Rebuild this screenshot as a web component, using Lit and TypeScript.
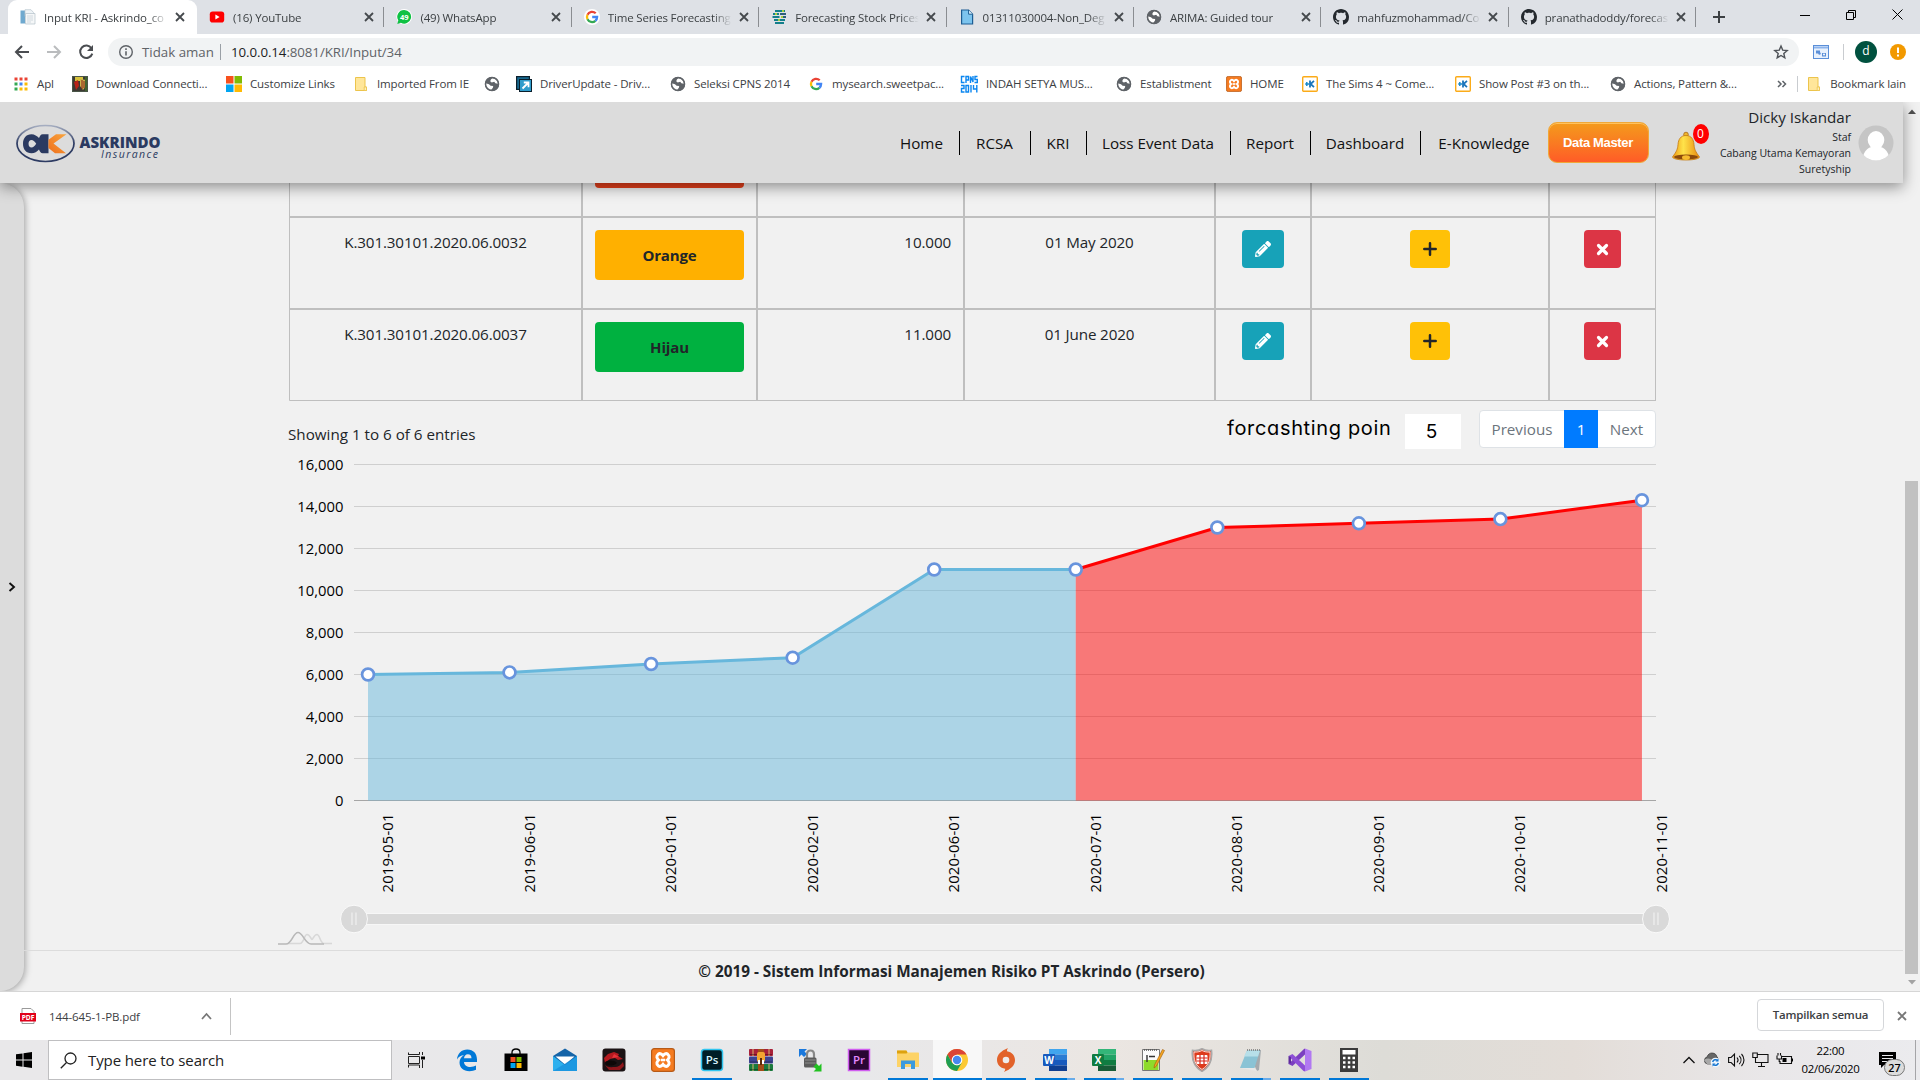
import { LitElement, html, svg, css, nothing } from "lit";
import { customElement } from "lit/decorators.js";
import { classMap } from "lit/directives/class-map.js";

const icon = (size: number, box: number, body: unknown) =>
  html`<svg class="ico" width=${size} height=${size} viewBox="0 0 ${box} ${box}">${body}</svg>`;

const globe = () => icon(16, 16, svg`
  <circle cx="8" cy="8" r="7.1" fill="#5f6368"/>
  <path d="M1.6 7.2 5 8.3l1.6 1.4 2.6.2-.3 1.8-2 2.6C3.500 13.500 1.500 11 1.600 7.200z" fill="#fff"/>
  <path d="M8.300 2.200 6.900 3.600 6.200 5.300l1.500 1.100 2.500-.6 1.200 1.400 2.500.5c0-2.600-1.600-5.200-5.600-5.500z" fill="#fff"/>
  <circle cx="8" cy="8" r="6.500" fill="none" stroke="#5f6368" stroke-width="1.500"/>`);
const google = () => icon(16, 16, svg`
  <circle cx="8" cy="8" r="8" fill="#fff"/>
  <g fill="none" stroke-width="2.300">
    <path d="M11.700 4.300A5.100 5.100 0 0 0 3.500 5.700" stroke="#ea4335"/>
    <path d="M3.500 5.700a5.100 5.100 0 0 0 0 4.600" stroke="#fbbc05"/>
    <path d="M3.500 10.300a5.100 5.100 0 0 0 7.900 1.500" stroke="#34a853"/>
    <path d="M8.200 8h4.900a5.100 5.100 0 0 1-1.700 3.800" stroke="#4285f4"/>
  </g>`);
const github = () => icon(16, 16, svg`
  <path fill="#24292e" d="M8 0C3.580 0 0 3.580 0 8c0 3.540 2.290 6.530 5.470 7.590.4.070.55-.17.55-.38 0-.19-.01-.82-.01-1.490-2.010.37-2.530-.49-2.690-.94-.09-.23-.48-.94-.82-1.130-.28-.15-.68-.52-.01-.53.63-.01 1.080.58 1.230.82.72 1.210 1.870.87 2.330.66.07-.52.28-.87.51-1.070-1.780-.2-3.640-.89-3.640-3.950 0-.87.31-1.590.82-2.150-.08-.2-.36-1.020.08-2.120 0 0 .67-.21 2.200.82.64-.18 1.320-.27 2-.27s1.360.09 2 .27c1.530-1.040 2.200-.82 2.200-.82.44 1.100.16 1.920.08 2.120.51.56.82 1.270.82 2.150 0 3.070-1.870 3.750-3.650 3.950.29.25.54.73.54 1.480 0 1.070-.01 1.930-.01 2.200 0 .21.15.46.55.38A8.010 8.010 0 0 0 16 8c0-4.420-3.580-8-8-8z"/>`);
const folder = () => icon(16, 16, svg`
  <path d="M2.500 1.500h9.500v9.500h1.500v3.500h-11z" fill="#ffe69a" stroke="#ecc44c"/>
  <path d="M11.200 14.500v-3.500h2.300v3.500z" fill="#ffefb8" stroke="#ecc44c" stroke-width=".8"/>`);
const xampp = (s: number) => icon(s, 16, svg`
  <rect x=".4" y=".4" width="15.200" height="15.200" rx="1.800" fill="#f57b20" stroke="#b75a17" stroke-width=".8"/>
  <path d="M4.800 4.200c1.200-.9 2.300-.2 3.200.9.900-1.100 2-1.800 3.200-.9 1.500 1.200.9 2.700-.3 3.800 1.200 1.100 1.800 2.600.3 3.800-1.200.9-2.300.2-3.200-.9-.9 1.100-2 1.800-3.200.9-1.500-1.200-.9-2.700.3-3.800-1.200-1.100-1.800-2.600-.3-3.800z" fill="none" stroke="#fff" stroke-width="2"/>
  <path d="M6.600 8h2.800" stroke="#fff" stroke-width="1.700"/>`);
const kaskus = () => icon(16, 16, svg`
  <rect x=".7" y=".7" width="14.600" height="14.600" rx="1" fill="#fff" stroke="#fbab19" stroke-width="1.400"/>
  <path d="M3.200 8h4M4.800 6v4" stroke="#1b8ac9" stroke-width="1.500"/><path d="M12 4.900 8.600 8l3.400 3.100M8 4.500v7" fill="none" stroke="#1b75bb" stroke-width="1.800"/>`);
const msft = () => icon(16, 16, svg`
  <path d="M0 0h7.500v7.500H0z" fill="#f8511d"/><path d="M8.500 0H16v7.500H8.500z" fill="#80bb03"/>
  <path d="M0 8.500h7.500V16H0z" fill="#02a5f1"/><path d="M8.500 8.500H16V16H8.500z" fill="#ffba03"/>`);

interface Tab { title: string; icon: unknown; active?: boolean }
const TABS: Tab[] = [
  { title: "Input KRI - Askrindo_co", active: true, icon: icon(16, 16, svg`
    <path d="M.5 1.500h4.500v13H.5z" fill="#6fa9cf"/><path d="M5 .7h6l2.500 2.800v4H5z" fill="#eef3f6" stroke="#b9c6ce" stroke-width=".7"/>
    <path d="M5.500 4.500h9.500v10.500H5.500z" fill="#f5f7f8" stroke="#b5c2ca" stroke-width=".7"/><path d="M7 7h6M7 9h6M7 11h6M7 13h4" stroke="#c8d2d8" stroke-width=".8"/>`) },
  { title: "(16) YouTube", icon: icon(16, 16, svg`
    <rect x=".8" y="2.500" width="14.400" height="11" rx="2.800" fill="#f00"/><path d="M6.400 5.500v5l4.200-2.500z" fill="#fff"/>`) },
  { title: "(49) WhatsApp", icon: icon(16, 16, svg`
    <circle cx="8.200" cy="7.800" r="7.800" fill="#fff"/><path d="M8.200 1a6.800 6.800 0 1 1-3.300 12.700L1.300 15l1-3.600A6.800 6.800 0 0 1 8.200 1z" fill="#0fc143"/>
    <text x="8.200" y="10.600" font-size="7.500" font-weight="700" fill="#fff" text-anchor="middle">49</text>`) },
  { title: "Time Series Forecasting", icon: google() },
  { title: "Forecasting Stock Prices", icon: icon(16, 16, svg`
    <path d="M4 2h10M2 5h6M1.500 8h7M3 11h11M4 14h9" stroke="#147f8b" stroke-width="2"/><path d="M9 5h6M10 8h5" stroke="#2c5f7c" stroke-width="2"/>
    <path d="M4 5h2M10 8h2M7 11h2M11 2h2" stroke="#a3cf3c" stroke-width="2"/>`) },
  { title: "01311030004-Non_Deg", icon: icon(16, 16, svg`
    <path d="M2.600 1h7l4 4.200V15h-11z" fill="#7cc4ee" stroke="#1d5d93" stroke-width="1.200"/><path d="M9.600 1v4.200h4" fill="#e1f3fd" stroke="#1d5d93"/>`) },
  { title: "ARIMA: Guided tour", icon: globe() },
  { title: "mahfuzmohammad/Co", icon: github() },
  { title: "pranathadoddy/forecas", icon: github() },
];

const BOOKMARKS: { label: string; icon: unknown }[] = [
  { label: "Apl", icon: icon(16, 16, svg`${[0, 1, 2].map(r => [0, 1, 2].map(c => svg`
    <rect x=${1.500 + c * 5} y=${1.500 + r * 5} width="3" height="3" fill=${["#ea4335", "#ea4335", "#ea4335", "#34a853", "#4285f4", "#fbbc05", "#34a853", "#fbbc05", "#fbbc05"][r * 3 + c]}/>`))}`) },
  { label: "Download Connecti...", icon: icon(16, 16, svg`
    <rect width="16" height="16" fill="#3c3a33"/><path d="M3 1h8v4H3z" fill="#d8c23c"/><path d="M2 6l4-2 1 6-3 4z" fill="#b92318"/><path d="M8 3l6 1v6l-3 4-3-4z" fill="#c9b24a"/><path d="M10 4v9M12 5v7" stroke="#8b1c14"/><path d="M13 1h2v14h-2z" fill="#42632d"/>
    <rect x=".5" y=".5" width="15" height="15" fill="none" stroke="#4a5548"/>`) },
  { label: "Customize Links", icon: msft() },
  { label: "Imported From IE", icon: folder() },
  { label: "", icon: globe() },
  { label: "DriverUpdate - Driv...", icon: icon(16, 16, svg`
    <rect x=".6" y=".6" width="12.800" height="12.800" fill="#17688f" stroke="#0b1f2c" stroke-width="1.200"/><rect x="3.500" y="3.500" width="12" height="12" fill="#2e9ccb" stroke="#0b1f2c"/>
    <path d="M6.500 12.500 12 7M7.800 6.500h4.700v4.700" stroke="#fff" stroke-width="1.800" fill="none"/>`) },
  { label: "Seleksi CPNS 2014", icon: globe() },
  { label: "mysearch.sweetpac...", icon: google() },
  { label: "INDAH SETYA MUS...", icon: icon(18, 18, svg`
    <g fill="none" stroke="#0b86f0" stroke-width="1.400"><path d="M4.500 1.500H1.500v6h3M6 8V1.500h2.500V5H6M10.500 8V1.500L13 7V1M17.500 1.500H15V4.500h2.300v3H14.500"/>
    <path d="M1 10.500h3v3H1.500v3.500h3M6 10.500h2.500V17H6zM11 10v7.500M13.500 10v4H17M16.800 10v7.500"/></g>`) },
  { label: "Establistment", icon: globe() },
  { label: "HOME", icon: xampp(16) },
  { label: "The Sims 4 ~ Come...", icon: kaskus() },
  { label: "Show Post #3 on th...", icon: kaskus() },
  { label: "Actions, Pattern &...", icon: globe() },
];

const close = (s = 10, c = "#45494d", w = 1.800) => html`<svg class="ico" width=${s} height=${s} viewBox="0 0 10 10"><path d="M1 1l8 8M9 1l-8 8" stroke=${c} stroke-width=${w}/></svg>`;

@customElement("browser-chrome")
class BrowserChrome extends LitElement {
  static styles = css`
    :host { display: block; font-family: "Open Sans", "Noto Sans", sans-serif; color: #3c4043; font-size: 11.500px; }
    .ico { display: block; flex: none; }
    svg text { font-family: "Open Sans", sans-serif; }
    .strip { height: 34px; background: #dee1e6; display: flex; padding-left: 8px; box-sizing: border-box; }
    .tab { width: 187.400px; box-sizing: border-box; display: flex; align-items: center; padding-left: 12px; position: relative; }
    .tab.active { width: 189px; background: #fff; border-radius: 9px 9px 0 0; }
    .tab.line { border-right: 1px solid #8a8d91; height: 20px; margin-top: 7px; }
    .tab.line:nth-child(9) { border-right-color: #8a8d91; }
    .name { margin-left: 8px; width: 125px; white-space: nowrap; overflow: hidden; letter-spacing: -.15px;
      -webkit-mask-image: linear-gradient(90deg, #000 84%, transparent 99%); }
    .tab .close { margin-left: 6px; display: flex; }
    .plus { margin-left: 16px; align-self: center; }
    .win { margin-left: auto; display: flex; gap: 36px; align-items: center; padding-right: 17px; height: 29px; }
    .bar { height: 36px; background: #fff; display: flex; align-items: center; box-sizing: border-box; padding: 0 13px 0 12px; }
    .nav { display: flex; gap: 12px; width: 96px; }
    .omni { height: 28px; border-radius: 14px; background: #f1f3f4; width: 1691px; box-sizing: border-box; display: flex; align-items: center; padding: 0 9px 0 10px; font-size: 13.300px; color: #5f6368; }
    .omni .safe { margin-left: 8px; width: 71px; white-space: nowrap; }
    .omni .url { margin-left: 10px; flex: 1; letter-spacing: -.08px; }
    .omni b { font-weight: 400; color: #202124; }
    .sep { width: 1px; background: #9aa0a6; height: 16px; margin-left: 7px; }
    .ext { margin-left: 14px; }
    .thin { width: 1px; height: 16px; background: #c9ccd0; margin: 0 11px 0 14px; }
    .ava { width: 22px; height: 22px; border-radius: 50%; background: #00513f; color: #fff; font-size: 12px; line-height: 20px; text-align: center; }
    .warn { margin-left: 13px; }
    .marks { height: 32px; box-sizing: border-box; padding: 0 0 5px 13px; background: #fff; display: grid; align-items: center;
      grid-template-columns: 59px 154px 127px 131px 32px 154px 138px 152px 156px 110px 76px 153px 155px 160px 1fr; }
    .mark { display: flex; gap: 8px; align-items: center; white-space: nowrap; letter-spacing: -.12px; }
    .rest { display: flex; align-items: center; justify-content: flex-end; padding-right: 14px; gap: 8px; }
    .rest .thin { margin: 0 0 0 2px; }
  `;
  render() {
    return html`
      <div class="strip">
        ${TABS.map((t, i) => html`<div class=${classMap({ tab: true, active: !!t.active, line: i > 0 })}>
          ${t.icon}<span class="name">${t.title}</span><span class="close">${close()}</span></div>`)}
        <svg class="plus" width="14" height="14" viewBox="0 0 14 14"><path d="M7 1v12M1 7h12" stroke="#3c4043" stroke-width="2"/></svg>
        <div class="win">
          <svg width="10" height="10"><path d="M0 5.500h10" stroke="#000"/></svg>
          <svg width="10" height="10"><path d="M.5 2.500h7v7h-7zM2.500 2.500v-2h7v7h-2" fill="none" stroke="#000"/></svg>
          <svg width="11" height="11"><path d="M.5.5l10 10M10.500.5l-10 10" stroke="#000"/></svg>
        </div>
      </div>
      <div class="bar">
        <div class="nav">
          ${icon(20, 20, svg`<path d="M17 10H4M10 4l-6 6 6 6" fill="none" stroke="#4a4d51" stroke-width="2"/>`)}
          ${icon(20, 20, svg`<path d="M3 10h13M10 4l6 6-6 6" fill="none" stroke="#babcbe" stroke-width="2"/>`)}
          ${icon(20, 20, svg`<path d="M15.500 6.200a6.200 6.200 0 1 0 .8 5.400" fill="none" stroke="#4a4d51" stroke-width="2"/><path d="M17 3v6h-6z" fill="#4a4d51"/>`)}
        </div>
        <div class="omni">
          ${icon(16, 16, svg`<circle cx="8" cy="8" r="6.300" fill="none" stroke="#5f6368" stroke-width="1.400"/><path d="M8 7.200v4.300M8 4.300v1.700" stroke="#5f6368" stroke-width="1.600"/>`)}
          <span class="safe">Tidak aman</span><span class="sep"></span>
          <span class="url"><b>10.0.0.14</b>:8081/KRI/Input/34</span>
          ${icon(18, 18, svg`<path d="M9 3l1.700 4.100 4.500.4-3.400 2.900 1 4.400L9 12.500l-3.800 2.300 1-4.400L2.800 7.500l4.500-.4z" fill="none" stroke="#4f5358" stroke-width="1.400"/>`)}
        </div>
        <svg class="ext" width="16" height="14" viewBox="0 0 16 14"><rect x=".5" y=".5" width="15" height="13" fill="#e8f1fd" stroke="#5b8fd8"/><path d="M1 2.500h14" stroke="#8db4ec" stroke-width="2"/><path d="M3 5.500h4v3H3zM9 8h4v3.500H9z" fill="#5b8fd8"/><circle cx="6.500" cy="8.500" r="1.200" fill="#5b8fd8"/><circle cx="11" cy="9.500" r="1" fill="#fff"/></svg>
        <span class="thin"></span><span class="ava">d</span>
        <svg class="warn" width="16" height="16" viewBox="0 0 16 16"><circle cx="8" cy="8" r="8" fill="#f29900"/><path d="M8 3.500v5.500M8 10.500v2" stroke="#fff" stroke-width="2"/></svg>
      </div>
      <div class="marks">
        ${BOOKMARKS.map(b => html`<div class="mark">${b.icon}${b.label ? html`<span>${b.label}</span>` : nothing}</div>`)}
        <div class="rest">
          <svg width="10" height="8" viewBox="0 0 10 8"><path d="M1 1l3 3-3 3M5.500 1l3 3-3 3" fill="none" stroke="#5f6368" stroke-width="1.500"/></svg>
          <span class="thin"></span><div class="mark">${folder()}<span>Bookmark lain</span></div>
        </div>
      </div>`;
  }
}

@customElement("site-header")
class SiteHeader extends LitElement {
  static styles = css`
    :host { display: flex; flex: none; position: relative; z-index: 2; height: 81px; background: #dcdcdc; box-shadow: 0 4px 14px rgba(0,0,0,.42);
      font-family: "Open Sans", "Noto Sans", sans-serif; color: #212529; box-sizing: border-box; align-items: center; clip-path: inset(0 -20px -30px 0); }
    .logo { display: block; margin-left: 15px; }
    .logo text { font-family: "Open Sans", sans-serif; }
    .menu { margin-left: 719.500px; display: flex; align-items: center; font-size: 15.200px; color: #111; height: 24px; padding-top: 1px; }
    .item { height: 24px; line-height: 24px; border-right: 1px solid #000; box-sizing: border-box; text-align: center; white-space: nowrap; }
    .item.last { border: 0; }
    .w0 { width: 75px; } .w1 { width: 71px; } .w2 { width: 56px; } .w3 { width: 144px; } .w4 { width: 80px; } .w5 { width: 110px; } .w6 { width: 127px; }
    .master { width: 101px; height: 41px; box-sizing: border-box; border: 1px solid #f0a838; border-radius: 9px; background: linear-gradient(#f49b1c, #ff5c27);
      box-shadow: inset 0 1px 0 #ffc25e; font: bold 13px/39px "Liberation Sans", sans-serif; color: #fff; text-align: center; letter-spacing: -.35px; }
    .bell { margin-left: 22px; width: 38px; height: 42px; position: relative; }
    .badge { position: absolute; left: 22px; top: 2px; width: 16px; height: 20px; border-radius: 50%; background: #f00; color: #fff; font-size: 12px; line-height: 20px; text-align: center; }
    .user { margin-left: auto; text-align: right; font-size: 10.500px; line-height: 16px; padding-bottom: 2px; }
    .who { font-size: 15.200px; line-height: 23px; display: block; }
    .user span { display: block; }
    .face { display: block; margin: 0 9px 0 7px; }
  `;
  render() {
    const items = ["Home", "RCSA", "KRI", "Loss Event Data", "Report", "Dashboard", "E-Knowledge"];
    return html`
      <svg class="logo" width="150" height="44" viewBox="0 0 150 44">
        <defs><linearGradient id="ring" x1="0" y1="0" x2="0" y2="1"><stop offset="0" stop-color="#a5adc0"/><stop offset=".5" stop-color="#2e3c63"/></linearGradient>
        <linearGradient id="or" x1="1" y1="0" x2="0" y2="1"><stop offset="0" stop-color="#f9a63f"/><stop offset="1" stop-color="#ee6f1c"/></linearGradient></defs>
        <ellipse cx="30.500" cy="22.500" rx="28.500" ry="18" fill="none" stroke="url(#ring)" stroke-width="1.700"/>
        <path d="M16.500 13.200c3.200 0 5.400 1.800 7.500 3.800 1.200-2.500 1.700-3.800 3.700-3.800h5.800v19.100h-5.800c-2 0-2.500-1.300-3.700-3.800-2.100 2-4.300 3.800-7.500 3.800-5.500 0-8.500-4-8.500-9.500s3-9.600 8.500-9.600z" fill="#2b3a61"/>
        <path d="M13.500 22.700c0-2.300 1.200-3.700 3-3.700s2.900 1.200 4.700 3.700c-1.800 2.600-2.900 3.800-4.700 3.800s-3-1.400-3-3.800z" fill="#dcdcdc"/>
        <path d="M33.500 18.700 41 13.200h10.500L38.500 22.500l12.500 9.800H40l-6.500-5.300z" fill="url(#or)"/>
        <text x="64.500" y="26.500" font-size="15" font-weight="800" fill="#2b3a61" textLength="81" lengthAdjust="spacingAndGlyphs">ASKRINDO</text>
        <text x="86" y="36.500" font-size="10.500" font-style="italic" fill="#2b3a61" textLength="57">Insurance</text>
      </svg>
      <div class="menu">${items.map((t, i) => html`<span class="item w${i} ${i === 6 ? "last" : ""}">${t}</span>`)}</div>
      <div class="master">Data Master</div>
      <div class="bell">
        <svg width="32" height="42" viewBox="0 0 32 42">
          <defs><linearGradient id="g"><stop offset="0" stop-color="#ee9a15"/><stop offset=".4" stop-color="#ffe34a"/><stop offset="1" stop-color="#e88c10"/></linearGradient></defs>
          <circle cx="15" cy="12.500" r="2.300" fill="#efb52c" stroke="#a86712" stroke-width=".8"/>
          <path d="M15 13.500c5.500 0 7.600 4 8 9 .4 5 1.500 7 5.500 12.500 0 1.500-5 3-13.500 3S1.500 36.500 1.500 35C5.500 29.500 6.600 27.500 7 22.500c.4-5 2.500-9 8-9z" fill="url(#g)" stroke="#c47a12" stroke-width=".8"/>
          <ellipse cx="15" cy="35" rx="12" ry="2.600" fill="#8c4a0c"/><ellipse cx="15" cy="35.600" rx="4" ry="2.400" fill="#f7bb2e"/>
        </svg><span class="badge">0</span>
      </div>
      <div class="user"><span class="who">Dicky Iskandar</span><span>Staf</span><span>Cabang Utama Kemayoran</span><span>Suretyship</span></div>
      <svg class="face" width="36" height="36" viewBox="0 0 36 36"><circle cx="18" cy="18" r="17.500" fill="#c5c5c5"/><ellipse cx="18" cy="15" rx="8.300" ry="9" fill="#fff"/><path d="M5.500 30c1.500-5 5-7.500 9.500-8.500h6c4.500 1 8 3.500 9.500 8.500-3.500 3.600-7.500 5.500-12.500 5.500S9 33.600 5.500 30z" fill="#fff"/></svg>`;
  }
}

const ROWS = [
  { code: "K.301.30101.2020.06.0032", status: "Orange", tone: "amber", value: "10.000", date: "01 May 2020" },
  { code: "K.301.30101.2020.06.0037", status: "Hijau", tone: "green", value: "11.000", date: "01 June 2020" },
];

@customElement("kri-table")
class KriTable extends LitElement {
  static styles = css`
    :host { display: block; font-family: "Open Sans", "Noto Sans", sans-serif; font-size: 15.200px; color: #212529; }
    .grid { display: grid; box-sizing: border-box; width: 1367px; height: 218px; border-left: 1px solid #bfbfbf; border-bottom: 1px solid #d4d4d4;
      grid-template-columns: 293px 175px 207px 251px 96px 238px 106px; grid-template-rows: 35px 92px 91px; }
    .cell { border-right: 2px solid #bfbfbf; border-bottom: 2px solid #bfbfbf; box-sizing: border-box; padding: 12px 12px 0; text-align: center; line-height: 25px; letter-spacing: -.13px; }
    .cell:nth-child(7n) { border-right-width: 1px; }
    .cell:nth-child(n + 15) { border-bottom-width: 1px; }
    .cell.cut { padding-top: 0; }
    .num { text-align: right; }
    .pill { height: 50px; border-radius: 4px; line-height: 50px; font-weight: 700; font-size: 15px; }
    .amber { background: #ffb000; } .green { background: #00b140; }
    .red { background: #e8401c; height: 5px; border-radius: 0 0 4px 4px; }
    .btn { display: inline-flex; height: 38px; border-radius: 4px; align-items: center; justify-content: center; vertical-align: top; }
    .edit { width: 42px; background: #17a2b8; } .add { width: 40px; background: #ffc107; } .del { width: 37px; background: #dc3545; }
  `;
  render() {
    return html`<div class="grid">
      ${[0, 1, 2, 3, 4, 5, 6].map(i => html`<div class="cell cut">${i === 1 ? html`<div class="red"></div>` : nothing}</div>`)}
      ${ROWS.map(r => html`
        <div class="cell">${r.code}</div>
        <div class="cell"><div class="pill ${r.tone}">${r.status}</div></div>
        <div class="cell num">${r.value}</div>
        <div class="cell">${r.date}</div>
        <div class="cell"><span class="btn edit"><svg width="16" height="16" viewBox="0 0 512 512"><path fill="#fff" d="M497.900 142.100l-46.100 46.100c-4.700 4.700-12.300 4.700-17 0l-111-111c-4.700-4.700-4.700-12.300 0-17l46.100-46.100c18.700-18.700 49.100-18.700 67.900 0l60.100 60.100c18.800 18.700 18.800 49.100 0 67.900zM284.200 99.800L21.600 362.400.4 483.900c-2.900 16.400 11.400 30.600 27.800 27.800l121.500-21.300 262.600-262.600c4.700-4.700 4.700-12.300 0-17l-111-111c-4.800-4.700-12.400-4.700-17.100 0zM124.100 339.900c-5.500-5.500-5.500-14.300 0-19.800l154-154c5.500-5.500 14.300-5.500 19.800 0s5.500 14.300 0 19.800l-154 154c-5.500 5.500-14.300 5.500-19.800 0zM88 424h48v36.300l-64.500 11.300-31.100-31.100L51.700 376H88v48z"/></svg></span></div>
        <div class="cell"><span class="btn add"><svg width="14" height="16" viewBox="0 0 14 16"><path d="M7 2.300v11.400M1.300 8h11.400" stroke="#212529" stroke-width="2.500" stroke-linecap="round"/></svg></span></div>
        <div class="cell"><span class="btn del"><svg width="13" height="13" viewBox="0 0 13 13"><path d="M2.500 2.500l8 8M10.500 2.500l-8 8" stroke="#fff" stroke-width="3.200" stroke-linecap="round"/></svg></span></div>`)}
    </div>`;
  }
}

const POINTS: [string, number][] = [
  ["2019-05-01", 6000], ["2019-06-01", 6100], ["2020-01-01", 6500], ["2020-02-01", 6800], ["2020-06-01", 11000],
  ["2020-07-01", 11000], ["2020-08-01", 13000], ["2020-09-01", 13200], ["2020-10-01", 13400], ["2020-11-01", 14300],
];

@customElement("kri-chart")
class KriChart extends LitElement {
  static styles = css`
    :host { display: block; margin-left: -19px; }
    svg { display: block; font-family: "Open Sans", "Noto Sans", sans-serif; font-size: 14.800px; fill: #000; }
  `;
  render() {
    const x = (i: number) => 98 + i * 141.550;
    const y = (v: number) => 350.500 - v * 0.021;
    const line = (a: number, b: number) => POINTS.slice(a, b).map(([, v], i) => `${x(i + a)},${y(v)}`).join(" ");
    const area = (a: number, b: number) => `${x(a)},350.500 ${line(a, b)} ${x(b - 1)},350.500`;
    const grip = (cx: number) => svg`<ellipse cx=${cx} cy="469" rx="13.500" ry="13.800" fill="#d9d9d9" stroke="#fff" stroke-opacity=".8"/><path d="M${cx - 2} 462.500v12.500M${cx + 2} 462.500v12.500" stroke="#f4f4f4"/>`;
    return html`<svg width="1420" height="500" viewBox="0 0 1420 500">
      ${[0, 1, 2, 3, 4, 5, 6, 7, 8].map(k => svg`
        <path d="M84 ${350.500 - k * 42}H1386" stroke=${k ? "#cfcfcf" : "#a6a6a6"}/>
        <text x="73.500" y=${355.500 - k * 42} text-anchor="end">${(k * 2000).toLocaleString("en-US")}</text>`)}
      <polygon points=${area(0, 6)} fill="#67b7dc" fill-opacity=".5"/>
      <polygon points=${area(5, 10)} fill="#ff0000" fill-opacity=".5"/>
      <polyline points=${line(0, 6)} fill="none" stroke="#67b7dc" stroke-width="3"/>
      <polyline points=${line(5, 10)} fill="none" stroke="#ff0000" stroke-width="3"/>
      ${POINTS.map(([d, v], i) => svg`
        <circle cx=${x(i)} cy=${y(v)} r="5.900" fill="#fff" stroke="#6894dd" stroke-width="2.700"/>
        <text transform="translate(${x(i) + 25} 442.500) rotate(-90)" textLength="79">${d}</text>`)}
      <rect x="84" y="463.500" width="1302" height="11" fill="#d9d9d9" stroke="#f7f7f7" stroke-width="1"/>
      ${grip(84)}${grip(1386)}
      <g fill="none" stroke-width="1.600"><path d="M18 493.500h12c4 0 4-9 7-9s4 5 5 5 2-5 5-5 3 9 7 9h8" stroke="#d8d8d8"/><path d="M8 494h8c6 0 7-11.500 12-11.500S35 494 41 494h13" stroke="#b8b8b8"/></g>
    </svg>`;
  }
}

const task = (body: unknown) => html`<svg width="24" height="24" viewBox="0 0 24 24">${body}</svg>`;
const office = (letter: string, c: string[]) => task(svg`
  <path d="M6 1h18v5.500H6z" fill=${c[0]}/><path d="M6 6.500h18V12H6z" fill=${c[1]}/><path d="M6 12h18v5.500H6z" fill=${c[2]}/><path d="M6 17.500h18V23H6z" fill=${c[3]}/>
  <rect x="0" y="6" width="12" height="12" rx="1" fill=${c[4]}/><text x="6" y="15.600" font-size="10" font-weight="700" fill="#fff" text-anchor="middle">${letter}</text>`);
const TASKS: { body: unknown; open?: boolean; active?: boolean; multi?: boolean }[] = [
  { body: task(svg`<path d="M2 11.500C2.500 5.500 6.500 1.500 12.300 1.500 18.500 1.500 22 5.800 22 11.500V14H9c.2 3.500 3 5 6.300 5 2.200 0 4.200-.5 5.700-1.400v4.200c-1.700.9-4 1.400-6.500 1.400C8.300 23.200 4.500 19.500 4.500 14.500c0-3.300 1.700-5.700 4.500-7.200C5.800 7.300 3.300 9 2 11.500zM9 10.200h7.500c0-2.500-1.300-4-3.600-4S9.200 7.900 9 10.200z" fill="#0078d7"/>`) },
  { body: task(svg`<path d="M8 7V4.500C8 2 9.500 1 12 1s4 1 4 3.500V7" fill="none" stroke="#000" stroke-width="1.300"/><path d="M.5 5.500h23V23h-23z" fill="#000"/><path d="M6.500 9h5v5h-5z" fill="#f25022"/><path d="M12.500 9h5v5h-5z" fill="#7fba00"/><path d="M6.500 15h5v5h-5z" fill="#00a4ef"/><path d="M12.500 15h5v5h-5z" fill="#ffb900"/>`) },
  { body: task(svg`<path d="M0 8 12 .5 24 8v15H0z" fill="#1564a8"/><path d="M2.500 8.500h19L12 16.500z" fill="#fff"/><path d="M0 8l12 9L24 8v15H0z" fill="#2eb0ee"/><path d="M24 8v15H0z" fill="#1389d8" opacity=".6"/>`) },
  { body: task(svg`<rect x=".5" y=".5" width="23" height="23" rx="3" fill="#1b1214"/><path d="M2 10l4-4 6-2 5 2-1 2 5 3-5 1-3-2-5 1-5 4z" fill="#b51a20"/><path d="M3 17c3 3 7 2 10 2s6-2 8-5l1 4-4 4H7z" fill="#8e161b"/><path d="M3 14c4-2 9-2 12 1-3 3-8 3-11 2z" fill="#0d0808"/><path d="M12 6l5 3-7 1z" fill="#e7343a"/>`) },
  { body: xampp(24) },
  { open: true, body: task(svg`<rect x="1.500" y="1.500" width="21" height="21" rx="3" fill="#001d26" stroke="#31c5f0" stroke-width="1.500"/><text x="12" y="16.200" font-size="11.500" font-weight="600" fill="#d7f4fe" text-anchor="middle">Ps</text>`) },
  { body: task(svg`<rect x="0" y="1" width="24" height="7" rx="1" fill="#a8213a"/><rect x="0" y="8.500" width="24" height="7" rx="1" fill="#3c4391"/><rect x="0" y="16" width="24" height="7" rx="1" fill="#1b7a3e"/><path d="M4 1v7M20 1v7M4 16v7M20 16v7" stroke="#d9b970"/><path d="M1 6.500h22M1 14h22M1 21.500h22" stroke="#00000055"/><path d="M9 1h6v22H9z" fill="#a34c18"/><rect x="8" y="4" width="8" height="10" rx="2" fill="#f2a632"/><path d="M9 12h6v4H9z" fill="#fff"/><path d="M12 10v7" stroke="#5d2a08" stroke-width="2"/>`) },
  { body: task(svg`<path d="M1 1h8L6.500 3.500 9 6 6 9 3.500 6.500 1 9z" fill="#1a78dc"/><path d="M9 10V6.500C9 4 10.500 2.500 12.500 2.500S16 4 16 6.500V10" fill="none" stroke="#888" stroke-width="2.200"/><rect x="6" y="9.500" width="12.500" height="10" rx="1.500" fill="#5c5c5c"/><path d="M7 12h10.500M7 15h10.500" stroke="#8c8c8c"/><path d="M23.500 23.500h-8l2.500-2.500-2.500-2.500 3-3 2.500 2.500 2.500-2.500z" fill="#21c121"/>`) },
  { body: task(svg`<rect x="1.500" y="1.500" width="21" height="21" fill="#2a0634" stroke="#d05df0" stroke-width="1.500"/><text x="12" y="15.500" font-size="11.500" font-weight="600" fill="#e389ff" text-anchor="middle">Pr</text>`) },
  { open: true, body: task(svg`<path d="M1 3.500C1 3 1.500 2.500 2 2.500h8l1.500 2H22c.6 0 1 .5 1 1V19H1z" fill="#fdd367"/><path d="M1 2.500h9.500l1 2-1 1H1z" fill="#dda20f"/><path d="M5 12.500h14V21h-4v-5h-6v5H5z" fill="#3c9ade"/>`) },
  { open: true, active: true, body: task(svg`<circle cx="12" cy="12" r="11" fill="#fcc934"/><path d="M12 1a11 11 0 0 1 9.500 5.500H12L7.200 14.700 2.400 6.600A11 11 0 0 1 12 1z" fill="#dc4437"/><path d="M2.400 6.600 7.200 15l4.800 2.500L16.700 14.700 12 23A11 11 0 0 1 2.400 6.600z" fill="#1e9e54"/><circle cx="12" cy="12" r="5.300" fill="#fff"/><circle cx="12" cy="12" r="4.200" fill="#4688f1"/>`) },
  { open: true, body: task(svg`<path d="M14 0c-1 1.500-1 2.200-1 3.200 5 .8 8 4.500 8 8.800 0 5.500-4 9-11 12 1-1.500 1.200-2.200 1.200-3.200C6 20 3 16.300 3 12 3 6.500 7 3 14 0z" fill="#e2622a"/><circle cx="12" cy="12" r="3.300" fill="#eeecec"/>`) },
  { open: true, multi: true, body: office("W", ["#41a5ee", "#2b7cd3", "#185abd", "#103f91", "#185abd"]) },
  { open: true, multi: true, body: office("X", ["#33b679", "#21a366", "#107c41", "#185c37", "#107c41"]) },
  { open: true, body: task(svg`<path d="M1.500 1.500h17v21h-17z" fill="#fbfbfb" stroke="#777"/><path d="M2.500 12h15v10h-15z" fill="#8edb2b"/><path d="M3 2h14" stroke="#555" stroke-width="1.500" stroke-dasharray="1 1"/><path d="M6 7v7M8 8.500h6" stroke="#333" stroke-width="1.400"/><path d="M21.500 1.500 13.500 17l-.5 3 2.300-1.800L23.500 2.500z" fill="#f5a51f" stroke="#9a5a10" stroke-width=".6"/>`) },
  { open: true, body: task(svg`<path d="M12 .8c3 1.800 6 2.200 9.500 1.600.9 8-.5 16-9.500 21C3 18.400 1.600 10.400 2.500 2.400 6 3 9 2.600 12 .8z" fill="#dd3a1c" stroke="#a9a9a9" stroke-width="1.600"/><path d="M12 2.500c2.700 1.400 5 1.700 8 1.500.5 7-.8 13-8 17.500C4.800 17 3.500 11 4 4c3 .2 5.300-.1 8-1.500z" fill="none" stroke="#fff" stroke-width=".8"/><rect x="6.500" y="7" width="11" height="9" rx="1" fill="#fff"/><path d="M6.500 10h11M6.500 13h11M10 7v9M14 7v9" stroke="#d8261c" stroke-width="1.200"/>`) },
  { open: true, multi: true, body: task(svg`<path d="M8 2.500 22 2l-2 20-2 1z" fill="#a5aaae"/><path d="M8 2.500h13L15.500 20H1z" fill="#8ac3d5"/><path d="M8 2.500h13l-2 6H5z" fill="#b7dfe9"/><path d="M8 2h13" stroke="#777" stroke-dasharray="1 1" stroke-width="1.500"/><path d="M1 20h14.500l2.500 3z" fill="#e8e8e8"/>`) },
  { open: true, body: task(svg`<path d="M17 .5 23.500 3v18L17 23.500z" fill="#b179f1"/><path d="M17 .5v6L4.500 18 .5 16 16 1z" fill="#7b3fc0"/><path d="M17 23.500v-6L4.500 6 .5 8l15 15z" fill="#8d4fd6"/><path d="M.5 8 3 9v6l-2.500 1z" fill="#5f2b9e"/>`) },
  { open: true, body: task(svg`<path d="M3 0h18v24H3z" fill="#3b3b3b"/><path d="M5.500 2h13v4.500h-13z" fill="#fff"/><path d="M6 10h2.500M10.800 10h2.500M15.500 10h2.500M6 14.500h2.500M10.800 14.500h2.500M15.500 14.500h2.500M6 19h2.500M10.800 19h2.500M15.500 19h2.500" stroke="#fff" stroke-width="2.400"/>`) },
];

@customElement("desktop-taskbar")
class DesktopTaskbar extends LitElement {
  static styles = css`
    :host { display: flex; height: 40px; background: linear-gradient(90deg, #e9e8ea 0, #e8e8ea 45%, #ebe6e2 58%, #dddcd7 72%, #e3ddd8 82%, #e9e7e9 92%, #ebebee 100%);
      font-family: "Open Sans", "Noto Sans", sans-serif; color: #000; align-items: stretch; }
    svg { display: block; } svg text { font-family: "Open Sans", sans-serif; }
    .start { width: 48px; display: flex; align-items: center; padding-left: 16px; box-sizing: border-box; }
    .search { width: 344px; box-sizing: border-box; background: #fff; border: 1px solid #bfbfc1; display: flex; align-items: center; gap: 11px; padding-left: 11px; font-size: 15px; color: #222; letter-spacing: -.1px; }
    .view { width: 50.500px; display: flex; align-items: center; justify-content: center; }
    .app { width: 49px; display: flex; align-items: center; justify-content: center; position: relative; }
    .active { background: #f8f8f8; }
    .open::after { content: ""; position: absolute; bottom: 0; left: 4.500px; right: 4.500px; height: 2px; background: #0078d7; }
    .active::after { left: 0; right: 0; }
    .multi::after { background: linear-gradient(90deg, #0078d7 80%, #68acea 80%); }
    .tray { margin-left: auto; display: flex; align-items: center; }
    .tray > svg { margin-right: 7px; }
    .tray > svg:nth-of-type(5) { margin-right: 1px; }
    .clock { width: 73px; text-align: center; font-size: 11.400px; line-height: 18px; letter-spacing: -.25px; }
    .note { position: relative; margin: 0 8px 0 12px; width: 28px; height: 24px; }
    .note svg { margin-top: 4px; }
    .count { position: absolute; left: 5px; top: 11px; width: 19px; height: 15px; border-radius: 9px; border: 1px solid #777; background: #dcdcdc; font-size: 10.800px; font-weight: 600; line-height: 15px; text-align: center; }
    .desk { width: 4px; border-left: 1px solid #a5a5a8; align-self: stretch; }
  `;
  render() {
    return html`
      <div class="start"><svg width="16" height="16"><path d="M0 2.300 6.500 1.400v6.200H0zM7.500 1.200 16 0v7.600H7.500zM0 8.500h6.500v6.200L0 13.800zM7.500 8.500H16V16l-8.500-1.200z"/></svg></div>
      <div class="search"><svg width="17" height="17" viewBox="0 0 17 17"><circle cx="10.500" cy="6.500" r="5.500" fill="none" stroke="#222" stroke-width="1.300"/><path d="M6.500 10.500.8 16.200" stroke="#222" stroke-width="1.300"/></svg>Type here to search</div>
      <div class="view"><svg width="18" height="16"><path d="M.5 3V.5M.5.5M.5 2.500h11V0M.5 15.500v-2.500h11V16M.5 4.500h11v7H.5zM14.500 0v3M14.500 8v8" fill="none" stroke="#222"/><path d="M13 4.500h4v3h-4z"/></svg></div>
      ${TASKS.map(t => html`<div class=${classMap({ app: true, open: !!t.open, active: !!t.active, multi: !!t.multi })}>${t.body}</div>`)}
      <div class="tray">
        <svg width="14" height="16"><path d="M1.500 11 7 5.500l5.500 5.500" fill="none" stroke="#111" stroke-width="1.300"/></svg>
        <svg width="18" height="16" viewBox="0 0 18 16"><path d="M4.500 12A3.600 3.600 0 0 1 4 5c1-3 3-4 5-4 3 0 4.700 2 5 4l1 1-4 6z" fill="#666" stroke="#333" stroke-width=".7"/><path d="M1 8c3-2 6-2 9 1l-1 3H4z" fill="#a8a8a8"/><circle cx="12.500" cy="10.500" r="4.800" fill="#eef6fd"/><path d="M9.700 10a3 3 0 0 1 5-1.500M15.300 11a3 3 0 0 1-5 1.500" fill="none" stroke="#1675cf" stroke-width="1.500"/><path d="M15.500 6.500v3h-3zM9.500 14.500v-3h3z" fill="#1675cf"/></svg>
        <svg width="17" height="16" viewBox="0 0 17 16"><path d="M.6 5.500h2.500L6.500 2v12L3.100 10.500H.6zM9 5.500c1.300 1.500 1.300 3.500 0 5M11.300 3.800c2.200 2.400 2.200 6 0 8.400M13.500 2c3.300 3.500 3.300 8.500 0 12" fill="none" stroke="#111" stroke-width="1.100"/></svg>
        <svg width="17" height="16" viewBox="0 0 17 16"><path d="M5 2.500h11v8H3.500V7M9.500 10.500v4M6 14.500h7M.8 1h4.500v4.500H.8zM3.500 5.500v3" fill="none" stroke="#111" stroke-width="1.100"/></svg>
        <svg width="17" height="16" viewBox="0 0 17 16"><path d="M6 4.500h9.500v7H4V9M1 3.500v3.500h4.500V3.500M2 1v2.500M4.500 1v2.500M3.200 7v3" fill="none" stroke="#111" stroke-width="1.100"/><path d="M6.500 6h4v4h-4zM16 6.500h1v3h-1z"/></svg>
        <div class="clock">22:00<br>02/06/2020</div>
        <div class="note"><svg width="18" height="17"><path d="M0 0h17v13H5l-3 3V13H0z"/><path d="M3 3.500h11M3 6.500h11M3 9.500h11" stroke="#e9e9ec"/></svg><span class="count">27</span></div>
        <span class="desk"></span>
      </div>`;
  }
}

@customElement("app-root")
class AppRoot extends LitElement {
  static styles = css`
    :host { display: flex; flex-direction: column; width: 1920px; height: 1080px; overflow: hidden; font-family: "Open Sans", "Noto Sans", sans-serif; font-size: 15.200px; color: #212529; background: #fff; }
    .page { display: flex; height: 890px; background: #f1f1f1; border-bottom: 1px solid #d6d6d6; box-sizing: border-box; overflow: hidden; }
    .col { width: 1903px; display: flex; flex-direction: column; }
    .body { flex: 1; display: flex; min-height: 0; }
    .side { width: 24px; background: #dcdcdc; border-radius: 0 24px 24px 0; box-shadow: 1px 1px 7px rgba(0,0,0,.35); display: flex; align-items: center; justify-content: center; }
    .main { flex: 1; display: flex; flex-direction: column; min-height: 0; }
    .content { padding-left: 265px; height: 767px; flex: none; }
    .info { width: 1368px; margin-left: -1px; height: 49px; display: flex; align-items: flex-start; line-height: 24px; }
    .showing { flex: 1; padding-top: 21px; }
    .label { width: 178px; margin-top: 15px; font-family: Inter, Lato, sans-serif; font-size: 20px; letter-spacing: .65px; color: #000; font-feature-settings: "cv11"; white-space: nowrap; }
    .count { width: 56px; height: 35px; margin-top: 13px; background: #fff; text-align: center; line-height: 35px; font-family: Inter, sans-serif; font-size: 19px; color: #000; box-sizing: border-box; padding-right: 3px; }
    .pager { display: flex; margin: 9px 0 0 18px; width: 177px; height: 38px; line-height: 36px; box-sizing: border-box; border: 1px solid #dee2e6; border-radius: 4px; background: #fff; color: #6c757d; text-align: center; }
    .prev { width: 84px; }
    .cur { width: 34px; margin: -1px 0; line-height: 38px; background: #007bff; color: #fff; }
    .next { flex: 1; }
    .foot { border-top: 1px solid #dcdcdc; flex: 1; min-height: 0; text-align: center; font-weight: 700; line-height: 40px; font-size: 15.300px; padding-right: 24px; }
    .scroll { width: 17px; display: flex; flex-direction: column; align-items: center; background: #f1f1f1; padding: 6px 0 6px; box-sizing: border-box; }
    .thumb { width: 13px; height: 493px; background: #c1c1c1; margin-top: auto; margin-bottom: 6px; }
    .shelf { height: 48px; display: flex; align-items: center; font-size: 11.500px; color: #3c4043; padding-left: 20px; box-sizing: border-box; background: #fff; }
    .file { width: 149px; margin-left: 13px; letter-spacing: -.1px; }
    .cut { width: 1px; height: 37px; background: #c4c4c4; margin: 0 auto 0 12px; }
    .all { width: 127px; height: 32px; box-sizing: border-box; border: 1px solid #d5d7da; border-radius: 4px; text-align: center; line-height: 29px; font-weight: 600; letter-spacing: -.2px; margin-bottom: 2px; }
    .x { margin: 0 13px 0 13px; }
  `;
  render() {
    return html`
      <browser-chrome></browser-chrome>
      <div class="page">
        <div class="col">
          <site-header></site-header>
          <div class="body">
            <div class="side"><svg width="8" height="10" viewBox="0 0 8 10"><path d="M1.500 1l4.500 4-4.500 4" fill="none" stroke="#111" stroke-width="1.900"/></svg></div>
            <div class="main">
              <div class="content">
                <kri-table></kri-table>
                <div class="info">
                  <span class="showing">Showing 1 to 6 of 6 entries</span>
                  <span class="label">forcashting poin</span><span class="count">5</span>
                  <div class="pager"><span class="prev">Previous</span><span class="cur">1</span><span class="next">Next</span></div>
                </div>
                <kri-chart></kri-chart>
              </div>
              <div class="foot">© 2019 - Sistem Informasi Manajemen Risiko PT Askrindo (Persero)</div>
            </div>
          </div>
        </div>
        <div class="scroll">
          <svg width="8" height="6"><path d="M0 6l4-4.500L8 6z" fill="#505050"/></svg>
          <span class="thumb"></span>
          <svg width="8" height="5"><path d="M0 0h8L4 4.500z" fill="#a3a3a3"/></svg>
        </div>
      </div>
      <div class="shelf">
        <svg width="16" height="16" viewBox="0 0 16 16"><path d="M2 .5h9l3 3V15.500H2z" fill="#fff" stroke="#9a9a9a"/><path d="M0 5h16v8.500H0z" fill="#e1001a"/><text x="8" y="11.700" font-family="Open Sans" font-size="6.600" font-weight="700" fill="#fff" text-anchor="middle">PDF</text></svg>
        <span class="file">144-645-1-PB.pdf</span>
        <svg width="20" height="8" viewBox="0 0 20 8"><path d="M4 7l4.500-5L13 7" fill="none" stroke="#777" stroke-width="1.700"/></svg>
        <span class="cut"></span>
        <div class="all">Tampilkan semua</div>
        <span class="x">${close(10, "#777", 1.800)}</span>
      </div>
      <desktop-taskbar></desktop-taskbar>`;
  }
}
